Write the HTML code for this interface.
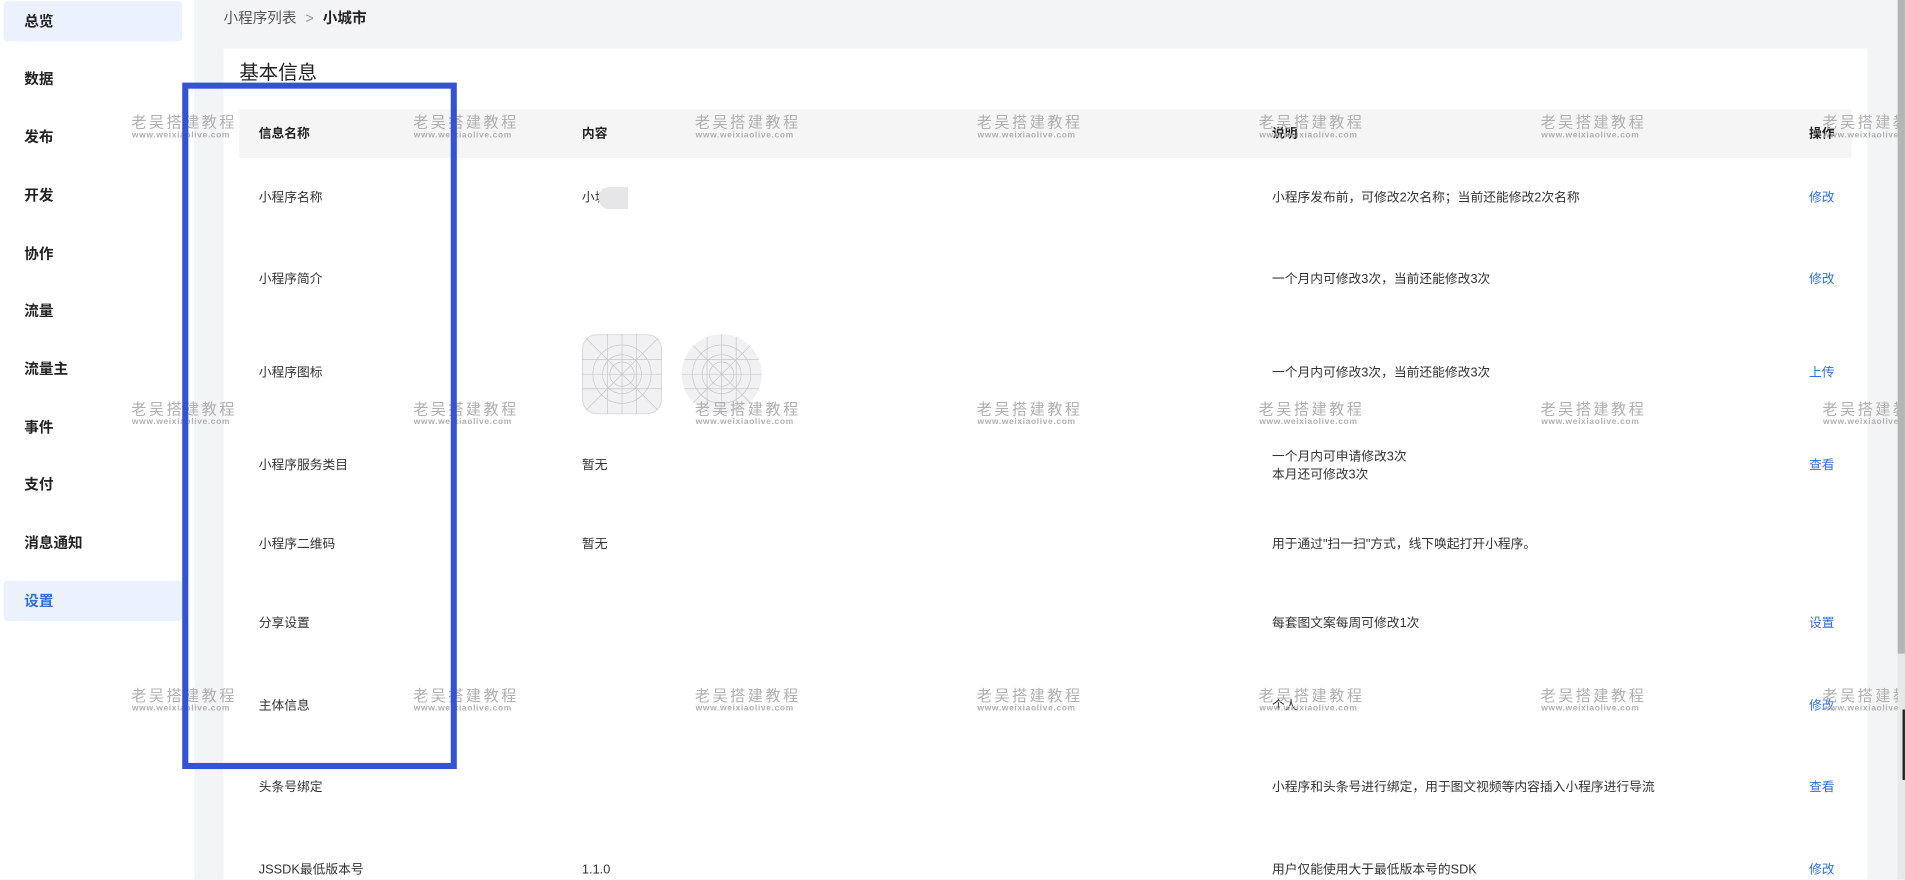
<!DOCTYPE html>
<html><head><meta charset="utf-8"><style>
html,body{margin:0;padding:0;width:1905px;height:880px;overflow:hidden;background:#f3f4f6;}
#w{position:absolute;left:0;top:0;width:1568px;height:724px;transform:scale(1.2149);transform-origin:0 0;overflow:hidden;background:#f3f4f6;font-family:"Liberation Sans","Noto Sans CJK SC",sans-serif;color:#333;}
.abs{position:absolute;}
.side{left:0;top:0;width:160px;height:724px;background:#fff;}
.nav{position:absolute;left:20px;font-size:12px;font-weight:bold;color:#222;line-height:16px;}
.hl{position:absolute;left:3px;width:147px;height:33px;background:#ebf1fd;border-radius:3px;}
.card{left:184px;top:40px;width:1353px;height:700px;background:#fff;}
.thead{left:197px;top:90px;width:1327px;height:40px;background:#f5f5f5;}
.t{position:absolute;font-size:10.5px;line-height:14px;color:#333;white-space:nowrap;}
.th{font-weight:bold;color:#222;}
.a{color:#2f6fdf;}
.wm{position:absolute;text-align:center;color:#b0b0b0;white-space:nowrap;width:82px;}
.wm b{display:block;font-size:12.5px;letter-spacing:2px;font-weight:normal;line-height:13px;}
.wm i{display:block;font-style:normal;font-size:7px;letter-spacing:0.5px;line-height:8px;font-weight:bold;}
</style></head><body><div id="w">
<div class="abs side"></div>
<div class="hl" style="top:1px"></div>
<div class="hl" style="top:478px"></div>
<div class="nav" style="top:10px">总览</div>
<div class="nav" style="top:57px">数据</div>
<div class="nav" style="top:105px">发布</div>
<div class="nav" style="top:153px">开发</div>
<div class="nav" style="top:201px">协作</div>
<div class="nav" style="top:248px">流量</div>
<div class="nav" style="top:296px">流量主</div>
<div class="nav" style="top:344px">事件</div>
<div class="nav" style="top:391px">支付</div>
<div class="nav" style="top:439px">消息通知</div>
<div class="nav" style="top:487px;color:#2f6fdf">设置</div>

<div class="t" style="left:184px;top:8px;font-size:12px;color:#555">小程序列表 <span style="color:#999;margin:0 4px">&gt;</span> <b style="color:#222">小城市</b></div>
<div class="abs card"></div>
<div class="t" style="left:197px;top:51px;font-size:16px;line-height:20px;color:#222">基本信息</div>
<div class="abs thead"></div>
<div class="t th" style="left:213px;top:103px">信息名称</div>
<div class="t th" style="left:479px;top:103px">内容</div>
<div class="t th" style="left:1047px;top:103px">说明</div>
<div class="t th" style="left:1489px;top:103px">操作</div>

<div class="t" style="left:213px;top:156px">小程序名称</div>
<div class="t" style="left:479px;top:156px">小城</div>
<div class="abs" style="left:493px;top:154px;width:24px;height:18px;background:#e6e6e8;border-radius:8px 0 0 8px"></div>
<div class="t" style="left:1047px;top:156px">小程序发布前，可修改2次名称；当前还能修改2次名称</div>
<div class="t a" style="left:1489px;top:156px">修改</div>

<div class="t" style="left:213px;top:223px">小程序简介</div>
<div class="t" style="left:1047px;top:223px">一个月内可修改3次，当前还能修改3次</div>
<div class="t a" style="left:1489px;top:223px">修改</div>

<svg class="abs" style="left:479px;top:275px" width="150" height="67" viewBox="0 0 150 67">
<defs><g id="g" fill="none" stroke="#c8c8cc" stroke-width="0.6">
<line x1="0" y1="0" x2="66" y2="66"/><line x1="66" y1="0" x2="0" y2="66"/>
<line x1="21" y1="0" x2="21" y2="66"/><line x1="45" y1="0" x2="45" y2="66"/>
<line x1="33" y1="0" x2="33" y2="66"/><line x1="0" y1="33" x2="66" y2="33"/>
<line x1="0" y1="21" x2="66" y2="21"/><line x1="0" y1="45" x2="66" y2="45"/>
<circle cx="33" cy="33" r="10"/><circle cx="33" cy="33" r="16"/><circle cx="33" cy="33" r="24"/></g>
<clipPath id="c1"><rect x="0" y="0" width="66" height="66" rx="12"/></clipPath>
<clipPath id="c2"><circle cx="33" cy="33" r="33"/></clipPath></defs>
<rect x="0.5" y="0.5" width="65" height="65" rx="12" fill="#f1f1f3" stroke="#ddd"/>
<g clip-path="url(#c1)"><use href="#g"/></g>
<g transform="translate(82,0)"><circle cx="33" cy="33" r="33" fill="#f1f1f3"/><g clip-path="url(#c2)"><use href="#g"/></g></g>
</svg>
<div class="t" style="left:213px;top:300px">小程序图标</div>
<div class="t" style="left:1047px;top:300px">一个月内可修改3次，当前还能修改3次</div>
<div class="t a" style="left:1489px;top:300px">上传</div>

<div class="t" style="left:213px;top:376px">小程序服务类目</div>
<div class="t" style="left:479px;top:376px">暂无</div>
<div class="t" style="left:1047px;top:369px;line-height:15px">一个月内可申请修改3次<br>本月还可修改3次</div>
<div class="t a" style="left:1489px;top:376px">查看</div>

<div class="t" style="left:213px;top:441px">小程序二维码</div>
<div class="t" style="left:479px;top:441px">暂无</div>
<div class="t" style="left:1047px;top:441px">用于通过"扫一扫"方式，线下唤起打开小程序。</div>

<div class="t" style="left:213px;top:506px">分享设置</div>
<div class="t" style="left:1047px;top:506px">每套图文案每周可修改1次</div>
<div class="t a" style="left:1489px;top:506px">设置</div>

<div class="t" style="left:213px;top:574px">主体信息</div>
<div class="t" style="left:1047px;top:574px">个人</div>
<div class="t a" style="left:1489px;top:574px">修改</div>

<div class="t" style="left:213px;top:641px">头条号绑定</div>
<div class="t" style="left:1047px;top:641px">小程序和头条号进行绑定，用于图文视频等内容插入小程序进行导流</div>
<div class="t a" style="left:1489px;top:641px">查看</div>

<div class="t" style="left:213px;top:709px">JSSDK最低版本号</div>
<div class="t" style="left:479px;top:709px">1.1.0</div>
<div class="t" style="left:1047px;top:709px">用户仅能使用大于最低版本号的SDK</div>
<div class="t a" style="left:1489px;top:709px">修改</div>

<div class="wm" style="left:108px;top:95px"><b>老吴搭建教程</b><i>www.weixiaolive.com</i></div>
<div class="wm" style="left:340px;top:95px"><b>老吴搭建教程</b><i>www.weixiaolive.com</i></div>
<div class="wm" style="left:572px;top:95px"><b>老吴搭建教程</b><i>www.weixiaolive.com</i></div>
<div class="wm" style="left:804px;top:95px"><b>老吴搭建教程</b><i>www.weixiaolive.com</i></div>
<div class="wm" style="left:1036px;top:95px"><b>老吴搭建教程</b><i>www.weixiaolive.com</i></div>
<div class="wm" style="left:1268px;top:95px"><b>老吴搭建教程</b><i>www.weixiaolive.com</i></div>
<div class="wm" style="left:1500px;top:95px"><b>老吴搭建教程</b><i>www.weixiaolive.com</i></div>
<div class="wm" style="left:108px;top:331px"><b>老吴搭建教程</b><i>www.weixiaolive.com</i></div>
<div class="wm" style="left:340px;top:331px"><b>老吴搭建教程</b><i>www.weixiaolive.com</i></div>
<div class="wm" style="left:572px;top:331px"><b>老吴搭建教程</b><i>www.weixiaolive.com</i></div>
<div class="wm" style="left:804px;top:331px"><b>老吴搭建教程</b><i>www.weixiaolive.com</i></div>
<div class="wm" style="left:1036px;top:331px"><b>老吴搭建教程</b><i>www.weixiaolive.com</i></div>
<div class="wm" style="left:1268px;top:331px"><b>老吴搭建教程</b><i>www.weixiaolive.com</i></div>
<div class="wm" style="left:1500px;top:331px"><b>老吴搭建教程</b><i>www.weixiaolive.com</i></div>
<div class="wm" style="left:108px;top:567px"><b>老吴搭建教程</b><i>www.weixiaolive.com</i></div>
<div class="wm" style="left:340px;top:567px"><b>老吴搭建教程</b><i>www.weixiaolive.com</i></div>
<div class="wm" style="left:572px;top:567px"><b>老吴搭建教程</b><i>www.weixiaolive.com</i></div>
<div class="wm" style="left:804px;top:567px"><b>老吴搭建教程</b><i>www.weixiaolive.com</i></div>
<div class="wm" style="left:1036px;top:567px"><b>老吴搭建教程</b><i>www.weixiaolive.com</i></div>
<div class="wm" style="left:1268px;top:567px"><b>老吴搭建教程</b><i>www.weixiaolive.com</i></div>
<div class="wm" style="left:1500px;top:567px"><b>老吴搭建教程</b><i>www.weixiaolive.com</i></div>

<div class="abs" style="left:150px;top:68px;width:216px;height:555px;border:5px solid #3352d4"></div>

<div class="abs" style="left:1562px;top:0;width:6px;height:724px;background:#e8e8e8"></div>
<div class="abs" style="left:1562px;top:0;width:6px;height:538px;background:#b5b5b5"></div>
<div class="abs" style="left:1566px;top:584px;width:2px;height:58px;background:#222"></div>
</div></body></html>
